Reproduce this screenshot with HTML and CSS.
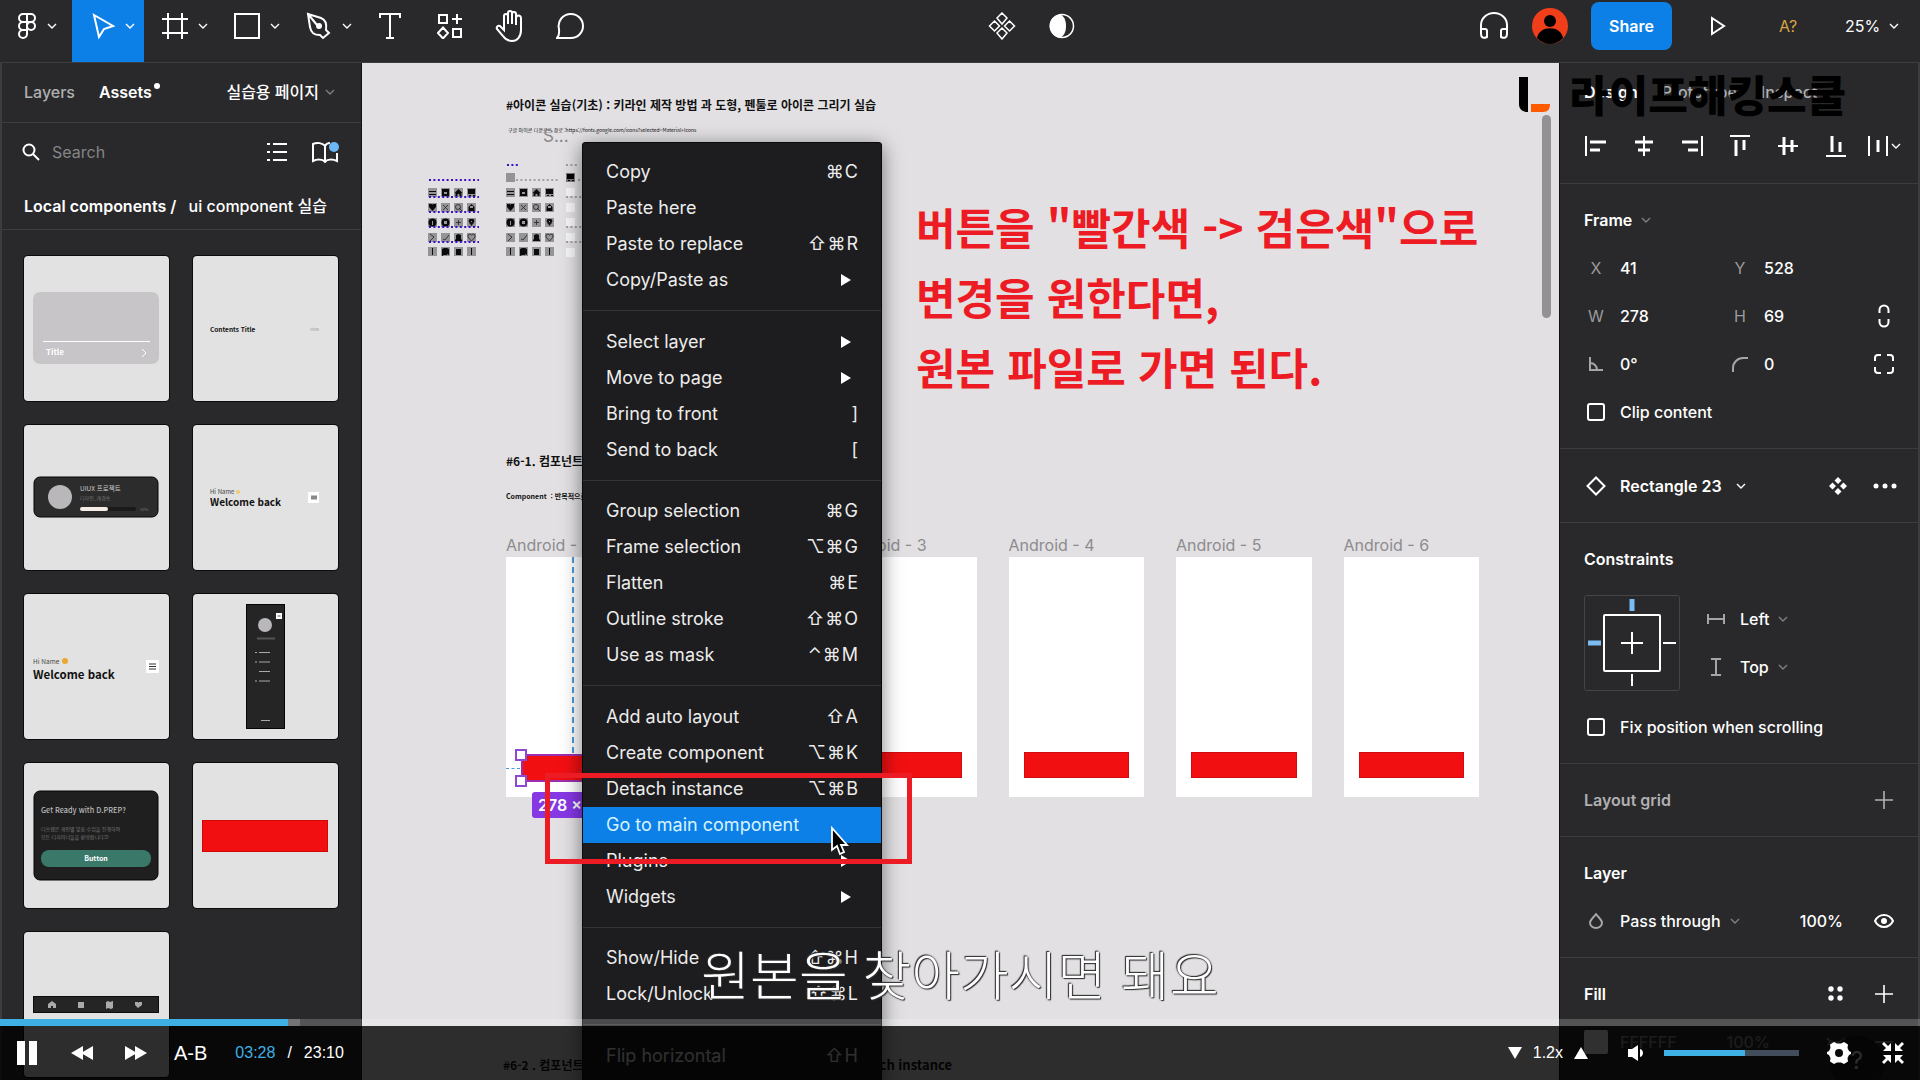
FILE: index.html
```html
<!DOCTYPE html>
<html lang="ko">
  <head>
    <meta charset="utf-8" />
    <title>ui component 실습</title>
    <link rel="stylesheet" href="styles.css">
  </head>
  <body>
    <svg class="defs" aria-hidden="true">
      <symbol id="chevron" viewBox="0 0 10 6"><path d="M1 1l4 4 4-4" fill="none" stroke="currentColor" stroke-width="1.4" /></symbol>
      <symbol id="plus" viewBox="0 0 18 18"><path d="M9 0v18M0 9h18" fill="none" stroke="currentColor" stroke-width="1.6" /></symbol>
      <!-- one block of small material icons, reused on the canvas -->
      <symbol id="iconset" viewBox="0 0 52 70">
        <g fill="#949396">
          <path d="M0 0h9v9H0zM13 0h9v9h-9zM26 0h9v9h-9zM39 0h9v9h-9zM0 15h9v9H0zM13 15h9v9h-9zM26 15h9v9h-9zM39 15h9v9h-9zM0 30h9v9H0zM13 30h9v9h-9zM26 30h9v9h-9zM39 30h9v9h-9zM0 45h9v9H0zM13 45h9v9h-9zM26 45h9v9h-9zM39 45h9v9h-9zM0 59h9v9H0zM13 59h9v9h-9zM26 59h9v9h-9zM39 59h9v9h-9z" />
        </g>
        <g fill="#0b0b0b">
          <path d="M1 3h7v1H1zM1 6h7v1H1zM14 1h7v7h-7zM30.500 1l4 4h-1v3h-2V6h-2v2h-2V5h-1zM40 1h7v5h-7zM41 7h2v1h-2zM45 7h2v1h-2z" />
          <path d="M4.500 23L1 19v-3h3l.5 1 .5-1h3v3zM43.500 16l3 3v4h-6v-4z" />
          <circle cx="4.500" cy="34.500" r="4" /><circle cx="17.500" cy="34.500" r="4" />
          <path d="M43.500 38l-3-5 1-2h4l1 2z" />
          <path d="M27 53v-1l1-1v-4l2.500-1 2.500 1v4l1 1v1z" />
          <path d="M4 60h1v7H4zM14 61l2-1v7l-2 1zM19 60l2 1v6l-2-1zM16 60h3v7h-3zM28 61h5v6h-5zM43 60h1v7h-1z" />
        </g>
        <g fill="none" stroke="#222" stroke-width=".8">
          <path d="M15 17l5 5M20 17l-5 5M31 20l3 3M2 46l4 3-4 4M15 51l2 1 4-5M43.500 53L40 49v-2l2-1 1.500 1 1.500-1 2 1v2zM28 34.500h5M30.500 32v5M41 35h5" />
          <circle cx="30" cy="19" r="2.500" />
        </g>
        <g fill="#999"><path d="M16 4h3v2h-3zM4 33h1v4H4zM16 33h3v3h-3zM42 18h3v2h-3zM43 33h1v1h-1z" /></g>
      </symbol>
    </svg>

    <header class="toolbar">
      <div class="tools">
        <button class="tool wide logo" aria-label="Menu">
          <svg width="20" height="28" viewBox="0 0 20 28" class="line"><path d="M10 2H6a4 4 0 0 0 0 8h4zM10 2h4a4 4 0 0 1 0 8h-4zM10 10H6a4 4 0 0 0 0 8h4zM10 18H6a4 4 0 1 0 4 4z" /><circle cx="14" cy="14" r="4" /></svg>
          <svg class="chev"><use href="#chevron" /></svg>
        </button>
        <button class="tool wide active" aria-label="Move">
          <svg width="24" height="28" viewBox="0 0 24 28" class="line"><path d="M3 3l19 11-9 3-5 8z" /></svg>
          <svg class="chev"><use href="#chevron" /></svg>
        </button>
        <button class="tool wide" aria-label="Frame">
          <svg width="26" height="28" viewBox="0 0 26 28" class="line"><path d="M6 1v26M20 1v26M0 7h26M0 21h26" /></svg>
          <svg class="chev"><use href="#chevron" /></svg>
        </button>
        <button class="tool wide" aria-label="Rectangle">
          <svg width="26" height="26" viewBox="0 0 26 26" class="line"><path d="M1 1h24v24H1z" /></svg>
          <svg class="chev"><use href="#chevron" /></svg>
        </button>
        <button class="tool wide" aria-label="Pen">
          <svg width="26" height="28" viewBox="0 0 26 28" class="line"><path d="M2 2l13 4c5 2 6 6 5 12l3 3-6 5-3-3C8 23 5 21 4 15zM2 2l9 11" /><circle cx="13" cy="14" r="2" fill="#fff" /></svg>
          <svg class="chev"><use href="#chevron" /></svg>
        </button>
        <button class="tool" aria-label="Text">
          <svg width="22" height="26" viewBox="0 0 22 26" class="line"><path d="M1 5V1h20v4M11 1v24M7 25h8" /></svg>
        </button>
        <button class="tool" aria-label="Resources">
          <svg width="26" height="26" viewBox="0 0 26 26" class="line"><path d="M2 2h8v8H2zM16 16h8v8h-8zM6 14.500l5 5.500-5 5.500L1 20zM20 1v10M15 6h10" /></svg>
        </button>
        <button class="tool" aria-label="Hand">
          <svg width="30" height="32" viewBox="0 0 30 32" class="line"><path d="M9 17V6a2 2 0 0 1 4 0v8V3a2 2 0 0 1 4 0v11V4a2 2 0 0 1 4 0v11V8a2 2 0 0 1 5 0v12c0 7-4 11-9 11-5 0-7-2-9-5L2 19c-1-2 1-4 3-3l4 4v-3" /></svg>
        </button>
        <button class="tool" aria-label="Comment">
          <svg width="28" height="28" viewBox="0 0 28 28" class="line"><path d="M1 26c3-3 2-6 2-9C1 9 7 2 15 2a12 12 0 0 1 0 24z" /></svg>
        </button>
      </div>
      <div class="middle">
        <button class="tool" aria-label="Create component">
          <svg width="28" height="28" viewBox="0 0 28 28" class="line thin"><path d="M14 1l5 5-5 6-5-6zM14 16l5 5-5 6-5-6zM6.500 9l5 5-5 5-5-5zM21.500 9l5 5-5 5-5-5z" /></svg>
        </button>
        <button class="tool" aria-label="Mask">
          <svg width="26" height="26" viewBox="0 0 26 26"><circle cx="13" cy="13" r="11.500" fill="none" stroke="#fff" stroke-width="1.500" /><path d="M12 1.500a11.500 11.500 0 0 0 0 23c4-3 5-7 5-11.500s-1-8.500-5-11.500z" fill="#fff" /></svg>
        </button>
      </div>
      <div class="actions">
        <button class="tool" aria-label="Audio">
          <svg width="30" height="30" viewBox="0 0 30 30" class="line"><path d="M2 20v-6a13 12 0 0 1 26 0v6M2 18h4a2 2 0 0 1 2 2v6c-4 2-6 0-6-3zM28 18h-4a2 2 0 0 0-2 2v6c4 2 6 0 6-3z" /></svg>
        </button>
        <svg class="avatar" width="36" height="36" viewBox="0 0 36 36"><circle cx="18" cy="18" r="18" fill="#f03e1b" /><circle cx="18" cy="13" r="6" /><path d="M5 30c2-13 24-13 26 0-8 8-18 8-26 0z" /></svg>
        <button class="share">Share</button>
        <button class="tool play" aria-label="Present"><svg width="16" height="20" viewBox="0 0 16 20" class="line"><path d="M2 2l12 8-12 8z" /></svg></button>
        <button class="tool missing">A?</button>
        <button class="tool zoom">25%<svg class="chev"><use href="#chevron" /></svg></button>
      </div>
    </header>

    <main class="workspace">
      <aside class="assets">
        <div class="tabs">
          <button class="tab">Layers</button>
          <button class="tab on">Assets<i class="dot"></i></button>
          <button class="tab page">실습용 페이지<svg class="chev dim"><use href="#chevron" /></svg></button>
        </div>
        <div class="find">
          <svg width="18" height="18" viewBox="0 0 18 18" class="line"><circle cx="7" cy="7" r="5.500" /><path d="M11 11l6 6" /></svg>
          <input type="text" placeholder="Search" aria-label="Search" />
          <button aria-label="List view"><svg width="20" height="18" viewBox="0 0 20 18" class="line"><path d="M6 1h14M6 9h14M6 17h14M0 1h3M0 9h3M0 17h3" /></svg></button>
          <button aria-label="Libraries"><svg width="28" height="22" viewBox="0 0 28 22" class="line"><path d="M14 5c-2-3-8-4-12-2v17c4-2 10-2 12 1 2-3 8-3 12-1V12M14 5v16M14 5c1-2 3-3 5-3" /><circle cx="23" cy="6" r="5" fill="#6cb8f5" stroke="none" /></svg></button>
        </div>
        <h2><b>Local components /</b> ui component 실습</h2>
        <div class="thumbs">
          <svg class="thumb" viewBox="0 0 145 145"><rect x="9" y="36" width="126" height="72" rx="7" fill="#c7c5c8" /><path d="M19 85.500h107M118 93l4 4-4 4" class="stroke-w" /><text x="22" y="99" font-size="8" font-weight="700" fill="#fff">Title</text></svg>
          <svg class="thumb" viewBox="0 0 145 145"><text x="17" y="76" font-size="6.500" font-weight="700">Contents Title</text><text x="117" y="75" font-size="4" fill="#999">View</text></svg>
          <svg class="thumb" viewBox="0 0 145 145"><rect x="10" y="52" width="124" height="40" rx="6" fill="#2c2c2d" stroke="#050505" /><circle cx="36" cy="72" r="12" fill="#b9b7b9" /><text x="56" y="66" font-size="6.500" fill="#ccc">UIUX 프로젝트</text><text x="56" y="75" font-size="5" fill="#777">디자인_개경송</text><rect x="56" y="82" width="56" height="4" rx="2" fill="#1a1a1a" /><rect x="56" y="82" width="28" height="4" rx="2" fill="#f5ece6" /><text x="116" y="86" font-size="4" fill="#777">50%</text></svg>
          <svg class="thumb" viewBox="0 0 145 145"><text x="17" y="69" font-size="6" fill="#444">Hi Name</text><circle cx="45" cy="67" r="2" fill="#f0cd6a" /><text x="17" y="81" font-size="10" font-weight="700">Welcome back</text><rect x="115" y="67" width="11" height="11" fill="#fff" /><path d="M118 70.500h6v4h-6z" fill="#888" /></svg>
          <svg class="thumb" viewBox="0 0 145 145"><text x="9" y="70" font-size="6.500" fill="#444">Hi Name</text><circle cx="41" cy="67" r="3" fill="#e8a92f" /><text x="9" y="85" font-size="11.500" font-weight="700">Welcome back</text><rect x="122" y="66" width="13" height="13" rx="1" fill="#fff" /><path d="M125 70h7M125 72.500h7M125 75h7" stroke="#333" /></svg>
          <svg class="thumb" viewBox="0 0 145 145"><rect x="53.500" y="10.500" width="38" height="124" fill="#252526" stroke="#050505" /><circle cx="72" cy="31" r="7" fill="#b9b7b9" /><rect x="83" y="19" width="6" height="6" fill="#fff" /><path d="M84.500 22h3" stroke="#555" /><path d="M64 44.500h18" stroke="#555" stroke-width="2" /><path d="M62 58.500h2M66 58.500h11M62 68h2M66 68h11M66 77.500h11M62 87h2M66 87h11M68 126.500h9" stroke="#aaa" /></svg>
          <svg class="thumb" viewBox="0 0 145 145"><rect x="10" y="28" width="124" height="89" rx="6" fill="#1f1f1f" stroke="#050505" /><text x="17" y="50" font-size="7.300" font-weight="500" fill="#bbb">Get Ready with D.PREP?</text><text x="17" y="68" font-size="5" fill="#777">디프렙은 개인별 맞춤 수업을 진행하여</text><text x="17" y="76" font-size="5" fill="#777">모든 디자이너들을 환영합니다:D</text><rect x="17" y="87" width="110" height="17" rx="8" fill="#3a7869" /><text x="72" y="98" font-size="7" font-weight="700" fill="#fff" text-anchor="middle">Button</text></svg>
          <svg class="thumb" viewBox="0 0 145 145"><rect x="9.500" y="57.500" width="125" height="31" fill="#f20f12" stroke="#d00808" /></svg>
          <svg class="thumb" viewBox="0 0 145 145"><rect x="9.500" y="64.500" width="125" height="16" fill="#252526" stroke="#0c0c0c" /><path d="M28 69l4 3v4h-3v-2h-2v2h-3v-4zM54 70h6v6h-6zM82 70l2-1 2 1 3-1v7l-2 1-3-1-2 1zM114 76l-3-3v-3h3l.5 1 .5-1h3v3z" fill="#aaa" /></svg>
        </div>
      </aside>

      <section class="canvas">
        <h3 class="note n1">#아이콘 실습(기초) : 키라인 제작 방법 과 도형, 펜툴로 아이콘 그리기 실습</h3>
        <p class="note n2">구글 아이콘 다운로드 경로 :https://fonts.google.com/icons?selected=Material+Icons</p>
        <span class="note n3">S...</span>
        <svg class="icons" width="160" height="96" viewBox="0 0 160 96">
          <use href="#iconset" x="0" y="25" width="52" height="70" />
          <g stroke="#3b10c8" stroke-width="2" stroke-dasharray="2 2.400"><path d="M1 17h50M1 34h50M1 49h50M1 64h50M1 79h50M79 2h12" /></g>
          <use href="#iconset" x="78" y="25" width="52" height="70" />
          <rect x="78" y="10" width="9" height="9" fill="#949396" />
          <path d="M88 17h42M138 2h12M150 17h10M138 34h22M138 64h22M138 79h22" stroke="#8b8a8c" stroke-width="1.500" stroke-dasharray="2 2.400" />
          <path d="M138 10h9v9h-9z" fill="#777" /><path d="M139 11h7v5h-7zM140 17h2v1h-2zM144 17h2v1h-2z" />
          <path d="M138 25h9v8h-9zM138 40h9v9h-9zM138 55h9v8h-9zM138 70h9v8h-9zM138 85h9v9h-9z" fill="#f5f5f5" />
        </svg>
        <h3 class="note n4">#6-1. 컴포넌트</h3>
        <p class="note n5">Component&nbsp; : 반복적으로</p>
        <div class="frames">
          <div class="frame"><span>Android - 1</span><div class="artboard selected"><i class="guide-v"></i><i class="guide-h"></i><div class="bar"><i class="handle top"></i><i class="handle bottom"></i></div></div></div>
          <div class="frame"><span>Android - 2</span><div class="artboard"><div class="bar"></div></div></div>
          <div class="frame"><span>Android - 3</span><div class="artboard"><div class="bar"></div></div></div>
          <div class="frame"><span>Android - 4</span><div class="artboard"><div class="bar"></div></div></div>
          <div class="frame"><span>Android - 5</span><div class="artboard"><div class="bar"></div></div></div>
          <div class="frame"><span>Android - 6</span><div class="artboard"><div class="bar"></div></div></div>
        </div>
        <span class="size">278 × 69</span>
        <h3 class="note n6">#6-2 . 컴포넌트</h3>
        <h3 class="note n7">Detach instance</h3>
        <p class="lesson">버튼을 "빨간색 -&gt; 검은색"으로<br />변경을 원한다면,<br />원본 파일로 가면 된다.</p>
        <i class="scroll"></i>

        <div class="menu">
          <button>Copy<kbd><i>⌘</i><i>C</i></kbd></button>
          <button>Paste here</button>
          <button>Paste to replace<kbd><i>⇧</i><i>⌘</i><i>R</i></kbd></button>
          <button>Copy/Paste as<i class="sub"></i></button>
          <hr />
          <button>Select layer<i class="sub"></i></button>
          <button>Move to page<i class="sub"></i></button>
          <button>Bring to front<kbd><i>]</i></kbd></button>
          <button>Send to back<kbd><i>[</i></kbd></button>
          <hr />
          <button>Group selection<kbd><i>⌘</i><i>G</i></kbd></button>
          <button>Frame selection<kbd><i>⌥</i><i>⌘</i><i>G</i></kbd></button>
          <button>Flatten<kbd><i>⌘</i><i>E</i></kbd></button>
          <button>Outline stroke<kbd><i>⇧</i><i>⌘</i><i>O</i></kbd></button>
          <button>Use as mask<kbd><i>⌃</i><i>⌘</i><i>M</i></kbd></button>
          <hr />
          <button>Add auto layout<kbd><i>⇧</i><i>A</i></kbd></button>
          <button>Create component<kbd><i>⌥</i><i>⌘</i><i>K</i></kbd></button>
          <button>Detach instance<kbd><i>⌥</i><i>⌘</i><i>B</i></kbd></button>
          <button class="hover">Go to main component</button>
          <button>Plugins<i class="sub"></i></button>
          <button>Widgets<i class="sub"></i></button>
          <hr />
          <button>Show/Hide<kbd><i>⇧</i><i>⌘</i><i>H</i></kbd></button>
          <button>Lock/Unlock<kbd><i>⇧</i><i>⌘</i><i>L</i></kbd></button>
          <hr />
          <button>Flip horizontal<kbd><i>⇧</i><i>H</i></kbd></button>
        </div>
        <i class="mark"></i>
        <svg class="cursor" width="20" height="30" viewBox="0 0 20 30"><path d="M2 2v22l5-4 3 8 4-2-3-7h6z" fill="#000" stroke="#fff" stroke-width="1.800" /></svg>
      </section>

      <aside class="design">
        <div class="tabs">
          <button class="tab on">Design</button>
          <button class="tab">Prototype</button>
          <button class="tab">Inspect</button>
        </div>
        <div class="align">
          <button aria-label="Align left"><svg width="22" height="22" viewBox="0 0 22 22" class="line"><path d="M1 1v20" /><path d="M5 7h16M5 15h10" stroke-width="3" /></svg></button>
          <button aria-label="Align center"><svg width="22" height="22" viewBox="0 0 22 22" class="line"><path d="M11 1v20" /><path d="M2 7h18M5 15h12" stroke-width="3" /></svg></button>
          <button aria-label="Align right"><svg width="22" height="22" viewBox="0 0 22 22" class="line"><path d="M21 1v20" /><path d="M1 7h16M7 15h10" stroke-width="3" /></svg></button>
          <button aria-label="Align top"><svg width="22" height="22" viewBox="0 0 22 22" class="line"><path d="M1 1h20" /><path d="M7 5v16M15 5v10" stroke-width="3" /></svg></button>
          <button aria-label="Align middle"><svg width="22" height="22" viewBox="0 0 22 22" class="line"><path d="M1 11h20" /><path d="M7 2v18M15 5v12" stroke-width="3" /></svg></button>
          <button aria-label="Align bottom"><svg width="22" height="22" viewBox="0 0 22 22" class="line"><path d="M1 21h20" /><path d="M7 1v16M15 7v10" stroke-width="3" /></svg></button>
          <button aria-label="Distribute"><svg width="20" height="22" viewBox="0 0 20 22" class="line"><path d="M1 1v20M19 1v20" /><path d="M10 5v12" stroke-width="3" /></svg><svg class="chev"><use href="#chevron" /></svg></button>
        </div>

        <section>
          <h4>Frame<svg class="chev dim"><use href="#chevron" /></svg></h4>
          <div class="props">
            <label for="px">X</label><input id="px" value="41" /><label for="py">Y</label><input id="py" value="528" /><span></span>
            <label for="pw">W</label><input id="pw" value="278" /><label for="ph">H</label><input id="ph" value="69" />
            <button aria-label="Constrain proportions"><svg width="12" height="24" viewBox="0 0 12 24" class="line"><path d="M1.500 9V6a4.500 4.500 0 0 1 9 0v3M1.500 15v3a4.500 4.500 0 0 0 9 0v-3" /></svg></button>
            <label for="pr" aria-label="Rotation"><svg width="14" height="14" viewBox="0 0 14 14" class="line gray"><path d="M1 0v13h13M1 6c4 0 7 3 7 7" /></svg></label><input id="pr" value="0°" />
            <label for="pc" aria-label="Corner radius"><svg width="16" height="15" viewBox="0 0 16 15" class="line gray"><path d="M1 15v-4A10 10 0 0 1 11 1h5" /></svg></label><input id="pc" value="0" />
            <button aria-label="Independent corners"><svg width="20" height="20" viewBox="0 0 20 20" class="line"><path d="M1 7V4a3 3 0 0 1 3-3h3M13 1h3a3 3 0 0 1 3 3v3M19 13v3a3 3 0 0 1-3 3h-3M7 19H4a3 3 0 0 1-3-3v-3" /></svg></button>
          </div>
          <div class="check"><input type="checkbox" id="clip" /><label for="clip">Clip content</label></div>
        </section>

        <section>
          <div class="instance">
            <svg width="20" height="20" viewBox="0 0 20 20" class="line"><path d="M10 1.500l8.500 8.500-8.500 8.500L1.500 10z" /></svg>
            <b>Rectangle 23</b><svg class="chev"><use href="#chevron" /></svg>
            <button class="push" aria-label="Swap instance"><svg width="18" height="18" viewBox="0 0 18 18" fill="#fff"><path d="M9 0l3.500 3.500L9 7 5.500 3.500zM9 11l3.500 3.500L9 18l-3.500-3.500zM3.500 5.500L7 9l-3.500 3.500L0 9zM14.500 5.500L18 9l-3.500 3.500L11 9z" /></svg></button>
            <button aria-label="More"><svg width="24" height="6" viewBox="0 0 24 6" fill="#fff"><circle cx="3" cy="3" r="2.500" /><circle cx="12" cy="3" r="2.500" /><circle cx="21" cy="3" r="2.500" /></svg></button>
          </div>
        </section>

        <section>
          <h4>Constraints</h4>
          <div class="constraints">
            <svg width="96" height="96" viewBox="0 0 96 96"><rect x=".5" y=".5" width="95" height="95" rx="2" fill="none" stroke="#444" /><rect x="20" y="20" width="56" height="56" rx="1" fill="none" stroke="#fff" stroke-width="2" /><path d="M48 37v22M37 48h22M79 48h13M48 79v12" stroke="#fff" stroke-width="2" /><path d="M48 4v12M4 48h13" stroke="#7cbcf0" stroke-width="5" /></svg>
            <div class="axis">
              <div><svg width="18" height="10" viewBox="0 0 18 10" class="line gray"><path d="M1 0v10M17 0v10M1 5h16" /></svg><button>Left<svg class="chev dim"><use href="#chevron" /></svg></button></div>
              <div><svg width="10" height="18" viewBox="0 0 10 18" class="line gray"><path d="M0 1h10M0 17h10M5 1v16" /></svg><button>Top<svg class="chev dim"><use href="#chevron" /></svg></button></div>
            </div>
          </div>
          <div class="check"><input type="checkbox" id="fix" /><label for="fix">Fix position when scrolling</label></div>
        </section>

        <section>
          <h4 class="muted">Layout grid<button class="push" aria-label="Add grid"><svg width="18" height="18"><use href="#plus" /></svg></button></h4>
        </section>

        <section>
          <h4>Layer</h4>
          <div class="row">
            <span class="cell"><svg width="14" height="16" viewBox="0 0 14 16" class="line gray"><path d="M7 1C4 5 1 7 1 10a6 5 0 0 0 12 0c0-3-3-5-6-9z" /></svg></span>
            <button>Pass through<svg class="chev dim"><use href="#chevron" /></svg></button>
            <span class="push">100%</span>
            <button class="cell" aria-label="Visibility"><svg width="20" height="14" viewBox="0 0 20 14" class="line"><path d="M1 7c4-8 14-8 18 0-4 8-14 8-18 0z" /><circle cx="10" cy="7" r="3" fill="#fff" stroke="none" /></svg></button>
          </div>
        </section>

        <section>
          <h4>Fill
            <button class="push cell" aria-label="Styles"><svg width="16" height="16" viewBox="0 0 16 16" fill="#fff"><circle cx="3" cy="3" r="2.700" /><circle cx="12" cy="3" r="2.700" /><circle cx="3" cy="12" r="2.700" /><circle cx="12" cy="12" r="2.700" /></svg></button>
            <button class="cell" aria-label="Add fill"><svg width="18" height="18"><use href="#plus" /></svg></button>
          </h4>
          <div class="row fill">
            <span class="cell"><i class="swatch"></i></span><span>FFFFFF</span><span class="opacity">100%</span>
            <span class="push cell"><svg width="20" height="10" viewBox="0 0 20 10" class="line"><path d="M1 1c4 6 14 6 18 0M4 5L2 8M16 5l2 3" /></svg></span>
            <span class="cell"><svg width="18" height="2" class="line"><path d="M0 1h18" /></svg></span>
          </div>
        </section>
        <span class="help">?</span>
      </aside>
    </main>

    <div class="brand">
      <svg width="32" height="36" viewBox="0 0 32 36"><path d="M0 0h9v35c-6 0-9-3-9-8z" /><path d="M12 27h19c0 5-2 8-7 8H12z" fill="#ff5a00" /></svg>
      <span>라이프해킹스쿨</span>
    </div>
    <p class="subtitle">원본을 찾아가시면 돼요</p>

    <footer class="player">
      <input type="range" class="seek" min="0" max="1390" value="208" aria-label="Seek" />
      <div class="controls">
        <button aria-label="Pause"><svg width="20" height="24" fill="#fff"><path d="M0 0h8v24H0zM12 0h8v24h-8z" /></svg></button>
        <button class="rw" aria-label="Rewind"><svg width="22" height="14" fill="#fff"><path d="M0 7l12-7v14zM10 7l12-7v14z" /></svg></button>
        <button class="ff" aria-label="Forward"><svg width="22" height="14" fill="#fff"><path d="M12 7L0 0v14zM22 7L10 0v14z" /></svg></button>
        <button class="ab">A-B</button>
        <div class="time"><span class="now">03:28</span><span>/</span><span>23:10</span></div>
        <div class="speed">
          <button aria-label="Slower"><svg width="14" height="12" fill="#fff"><path d="M0 0h14L7 12z" /></svg></button>
          <span>1.2x</span>
          <button aria-label="Faster"><svg width="14" height="12" fill="#fff"><path d="M0 12h14L7 0z" /></svg></button>
        </div>
        <button class="mute" aria-label="Mute"><svg width="16" height="16" viewBox="0 0 16 16" fill="#fff"><path d="M0 4h4l6-4v16l-6-4H0zM12 4c4 1 4 7 0 8z" /></svg></button>
        <input type="range" class="volume" min="0" max="100" value="60" aria-label="Volume" />
        <button class="gear" aria-label="Settings"><svg width="24" height="24" viewBox="0 0 24 24"><path d="M7 1l3 1.500h4L17 1l4 2.500-.5 3.500 1.500 3 2 1v2l-2 1-1.500 3 .5 3.500-4 2.500-3-1.500h-4L7 23l-4-2.500.5-3.500L2 14l-2-1v-2l2-1 1.500-3L3 3.500z" fill="#fff" /><circle cx="12" cy="12" r="4" fill="#0a0a0a" /></svg></button>
        <button aria-label="Exit full screen"><svg width="22" height="22" viewBox="0 0 22 22" fill="#fff"><path d="M9 9H1l3-3-4-4 2-2 4 4 3-3zM13 9h8l-3-3 4-4-2-2-4 4-3-3zM9 13H1l3 3-4 4 2 2 4-4 3 3zM13 13h8l-3 3 4 4-2 2-4-4-3 3z" /></svg></button>
      </div>
    </footer>
  </body>
</html>
```

FILE: styles.css
```css
* {
  box-sizing: border-box;
}
body {
  margin: 0;
  height: 100vh;
  display: flex;
  flex-direction: column;
  position: relative;
  overflow: hidden;
  background: #29292b;
  color: #fff;
  font: 16px/24px Inter, "Noto Sans CJK KR", sans-serif;
}
button {
  display: flex;
  align-items: center;
  border: 0;
  padding: 0;
  background: none;
  color: inherit;
  font: inherit;
}
input {
  min-width: 0;
  border: 0;
  padding: 0;
  background: none;
  color: inherit;
  font: inherit;
}
h2, h3, h4, p {
  margin: 0;
  font-size: 16px;
}
i {
  font-style: normal;
}
svg {
  flex: none;
}
.defs {
  position: absolute;
  width: 0;
  height: 0;
}
.line {
  fill: none;
  stroke: #fff;
  stroke-width: 2;
}
.thin {
  stroke-width: 1.5;
}
.gray {
  stroke: #a5a5a7;
}
.chev {
  width: 10px;
  height: 6px;
}
.dim {
  color: #808082;
}
.push {
  margin-left: auto;
}

/* toolbar */
.toolbar {
  display: flex;
  flex: none;
  height: 63px;
  border-bottom: 1px solid #3d3d3f;
}
.tools, .middle, .actions {
  display: flex;
  align-items: stretch;
}
.middle {
  flex: 1;
  justify-content: center;
}
.tool {
  width: 60px;
  justify-content: center;
  padding-bottom: 10px;
}
.wide {
  width: 72px;
  gap: 10px;
  padding-left: 10px;
}
.logo {
  padding-left: 2px;
}
.active {
  background: #0d80e8;
}
.actions {
  width: 456px;
}
.avatar {
  margin: 8px 23px 0 8px;
}
.share {
  width: 81px;
  height: 48px;
  margin-top: 2px;
  justify-content: center;
  border-radius: 8px;
  background: #0d80e8;
  font-weight: 600;
}
.play {
  width: 92px;
}
.missing {
  width: 48px;
  color: #d9a441;
}
.zoom {
  flex: 1;
  gap: 9px;
  padding-left: 12px;
}

.workspace {
  flex: 1;
  min-height: 0;
  display: grid;
  grid-template-columns: 362px 1fr 361px;
}

/* left panel */
.assets {
  min-height: 0;
  overflow: hidden;
  border-left: 2px solid #3d3d3f;
  border-right: 1px solid #111;
}
.tabs {
  display: flex;
  gap: 24px;
  height: 60px;
  padding: 0 26px 2px 22px;
}
.assets .tabs {
  border-bottom: 1px solid #3d3d3f;
}
.tab {
  color: #b0b0b2;
  font-weight: 500;
}
.tab.on {
  color: #fff;
  font-weight: 600;
}
.dot {
  width: 6px;
  height: 6px;
  margin: -12px 0 0 2px;
  border-radius: 50%;
  background: #fff;
}
.page {
  margin-left: auto;
  gap: 6px;
  color: #fff;
}
.find {
  display: flex;
  align-items: center;
  gap: 12px;
  height: 58px;
  padding: 0 22px 0 20px;
}
.find input {
  flex: 1;
}
.find input::placeholder {
  color: #858587;
}
.find button + button {
  margin-left: 12px;
}
.assets h2 {
  height: 49px;
  padding: 13px 22px 0;
  border-bottom: 1px solid #3d3d3f;
  font-weight: 500;
  white-space: nowrap;
}
.assets h2 b {
  font-weight: 600;
  margin-right: 8px;
}
.thumbs {
  display: grid;
  grid-template-columns: 145px 145px;
  gap: 24px;
  padding: 26px 22px;
}
.thumb {
  width: 145px;
  height: 145px;
  border-radius: 4px;
  background: #e2e2e2;
  box-shadow: 0 0 0 1px #0c0c0c;
  fill: #111;
  font-family: "Noto Sans CJK KR", sans-serif;
}
.stroke-w {
  fill: none;
  stroke: #fff;
}

/* canvas */
.canvas {
  position: relative;
  overflow: hidden;
  background: #e2e0e3;
  color: #111;
}
.note {
  position: absolute;
  white-space: nowrap;
  font: 700 12px/20px "Noto Sans CJK KR", sans-serif;
}
.n1 { left: 144px; top: 32px; }
.n2 { left: 146px; top: 57px; font-size: 5px; font-weight: 400; }
.n3 { left: 181px; top: 63px; font: 17px/20px Inter, sans-serif; color: #888; }
.n4 { left: 144px; top: 388px; }
.n5 { left: 144px; top: 423px; font-size: 7px; }
.n6 { left: 141px; top: 992px; }
.n7 { left: 488px; top: 992px; font-size: 13px; }
.icons {
  position: absolute;
  left: 66px;
  top: 100px;
}
.frames {
  position: absolute;
  left: 144px;
  top: 470px;
  width: 973px;
  display: grid;
  grid-template-columns: repeat(6, 1fr);
  gap: 32px;
}
.frame span {
  color: #8d8c8e;
}
.artboard {
  position: relative;
  display: flex;
  align-items: flex-end;
  height: 240px;
  padding: 0 15px 19px;
  background: #fff;
}
.bar {
  position: relative;
  flex: 1;
  height: 26px;
  border: 1px solid #d00c10;
  background: #f20f12;
}
.selected {
  padding-bottom: 15px;
}
.selected .bar {
  height: 28px;
  border: 2px solid #9b2fae;
}
.handle {
  position: absolute;
  left: -8px;
  width: 12px;
  height: 12px;
  border: 2px solid #8a4bd0;
  background: #fff;
}
.handle.top { top: -7px; }
.handle.bottom { bottom: -7px; }
.guide-v {
  position: absolute;
  left: 66px;
  top: 0;
  height: 196px;
  border-left: 2px dashed #4a98dc;
}
.guide-h {
  position: absolute;
  left: 0;
  bottom: 28px;
  width: 14px;
  border-top: 1px dashed #4a98dc;
}
.size {
  position: absolute;
  left: 170px;
  top: 729px;
  padding: 0 6px;
  border-radius: 3px;
  background: #8638e5;
  color: #fff;
  font-weight: 600;
  line-height: 26px;
}
.lesson {
  position: absolute;
  left: 554px;
  top: 128px;
  color: #ed1c24;
  font: 700 43px/70px "Noto Sans CJK KR", sans-serif;
  white-space: nowrap;
}
.scroll {
  position: absolute;
  right: 8px;
  top: 52px;
  width: 9px;
  height: 203px;
  border-radius: 5px;
  background: #929194;
}

/* context menu */
.menu {
  position: absolute;
  left: 220px;
  top: 79px;
  width: 300px;
  height: 1000px;
  padding-top: 11px;
  border: 1px solid #0a0a0a;
  border-radius: 3px;
  background: #1d1c1e;
  box-shadow: 0 4px 20px rgba(0, 0, 0, .5);
  color: #ececec;
  font-size: 18px;
}
.menu button {
  width: 100%;
  height: 36px;
  padding: 0 23px;
}
.menu .hover {
  background: #0d80e8;
  color: #d6f3ff;
}
.menu hr {
  margin: 12px 0;
  border: 0;
  border-top: 1px solid #343335;
}
.menu hr:nth-of-type(odd) {
  margin-bottom: 13px;
}
.menu kbd {
  display: flex;
  gap: 1px;
  margin-left: auto;
  font: inherit;
}
.sub {
  margin: 0 7px 0 auto;
  border-left: 10px solid #fff;
  border-top: 6px solid transparent;
  border-bottom: 6px solid transparent;
}
.mark {
  position: absolute;
  left: 183px;
  top: 710px;
  width: 367px;
  height: 91px;
  border: 5px solid #ed1c24;
}
.cursor {
  position: absolute;
  left: 468px;
  top: 763px;
}

/* right panel */
.design {
  position: relative;
  min-height: 0;
  overflow: hidden;
  border-left: 1px solid #111;
  border-right: 2px solid #3d3d3f;
  font-weight: 500;
}
.design .tabs {
  padding-left: 24px;
}
.align {
  display: flex;
  height: 60px;
  padding: 0 12px 14px;
}
.align button {
  flex: none;
  width: 48px;
  justify-content: center;
  gap: 3px;
}
.design section {
  padding: 12px 10px 12px 12px;
  border-top: 1px solid #3d3d3f;
}
.design h4 {
  display: flex;
  align-items: center;
  height: 48px;
  padding-left: 12px;
  font-weight: 600;
}
.design h4 .chev {
  margin-left: 9px;
}
.muted {
  color: #b0b0b2;
}
.muted .push {
  margin-right: 15px;
}
.props {
  display: grid;
  grid-template-columns: 48px 96px 48px 96px 48px;
  grid-auto-rows: 48px;
  align-items: center;
}
.props label {
  display: flex;
  justify-content: center;
  color: #9a9a9c;
  font-weight: 400;
}
.props button {
  justify-content: center;
}
.check, .instance, .row {
  display: flex;
  align-items: center;
  height: 48px;
}
.check {
  gap: 15px;
  padding-left: 15px;
}
.check input {
  appearance: none;
  width: 18px;
  height: 18px;
  margin: 0;
  border: 2px solid #fff;
  border-radius: 3px;
}
.instance {
  height: 49px;
  padding: 0 11px 0 14px;
}
.instance b {
  margin: 0 14px;
  font-weight: 600;
}
.instance .push {
  margin-right: 26px;
}
.constraints {
  display: flex;
  gap: 17px;
  padding: 12px;
}
.axis div {
  display: grid;
  grid-template-columns: 38px auto;
  align-items: center;
  justify-items: center;
  height: 48px;
}
.axis div button {
  justify-self: start;
  margin-left: 5px;
}
.axis .chev, .row .chev {
  margin-left: 9px;
}
.cell {
  display: flex;
  flex: none;
  width: 48px;
  justify-content: center;
}
.row .push {
  padding-right: 17px;
}
.fill {
  color: #8d8d8f;
}
.fill .line {
  stroke: #8d8d8f;
}
.fill .push {
  padding-right: 0;
}
.swatch {
  width: 24px;
  height: 24px;
  border-radius: 2px;
  background: #eee;
}
.opacity {
  margin-left: 50px;
}
.help {
  position: absolute;
  right: 34px;
  bottom: -10px;
  width: 54px;
  height: 54px;
  border-radius: 50%;
  background: #1a1a1b;
  color: #ddd;
  font-size: 24px;
  font-weight: 400;
  line-height: 50px;
  text-align: center;
}

/* watermark, caption and video controls lie over the recording */
.brand {
  position: absolute;
  right: 74px;
  top: 77px;
  display: flex;
  gap: 18px;
  color: #000;
  font: 900 43px/32px "Noto Sans CJK KR", sans-serif;
}
.subtitle {
  position: absolute;
  left: 0;
  right: 0;
  bottom: 72px;
  color: #fff;
  font: 300 53px/70px "Noto Sans CJK KR", sans-serif;
  text-align: center;
  text-shadow: 0 0 2px #222, 1px 1px 1px #333, -1px -1px 1px #333;
}
.player {
  position: absolute;
  left: 0;
  right: 0;
  bottom: 0;
  font: 16px/20px "Liberation Sans", Arial, sans-serif;
}
.seek, .volume {
  display: block;
  appearance: none;
  margin: 0;
}
.seek {
  width: 100%;
  height: 7px;
  background: linear-gradient(90deg, #3eb0e4 15%, rgba(255, 255, 255, .35) 15%, rgba(255, 255, 255, .35) 15.6%, rgba(255, 255, 255, .2) 15.6%);
}
.volume {
  width: 135px;
  height: 6px;
  margin: 0 28px 0 20px;
  background: linear-gradient(90deg, #3eb0e4 60%, #414d5b 60%);
}
.seek::-webkit-slider-thumb, .volume::-webkit-slider-thumb {
  appearance: none;
  width: 0;
  height: 0;
}
.controls {
  display: flex;
  align-items: center;
  height: 54px;
  padding: 0 16px 0 17px;
  background: rgba(0, 0, 0, .8);
}
.rw {
  margin-left: 34px;
}
.ff {
  margin: 0 27px 0 32px;
}
.ab {
  font-size: 20px;
}
.time {
  display: flex;
  gap: 12px;
  margin-left: 28px;
}
.now {
  color: #3eb0e4;
}
.speed {
  display: flex;
  align-items: center;
  gap: 11px;
  margin-left: auto;
}
.mute {
  margin-left: 40px;
}
.gear {
  margin-right: 31px;
}
```
